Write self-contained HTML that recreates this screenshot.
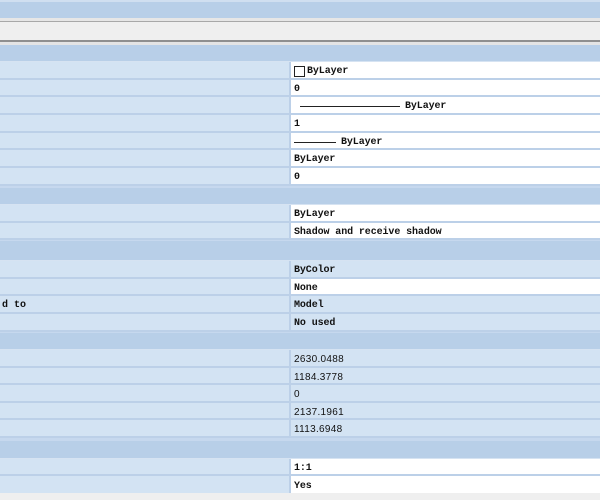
<!DOCTYPE html>
<html><head><style>
*{margin:0;padding:0;box-sizing:border-box}
body{width:600px;height:500px;overflow:hidden;background:#efefef;font-family:"Liberation Mono","Noto Serif CJK SC",monospace;font-size:10px;color:#111;position:relative}
.a{position:absolute;left:0;width:600px}
.hd{background:#b8cfe8;border-bottom:1px solid #d6e3f2}
.r{display:flex;border-bottom:2px solid #bcd0e8}
.r .k{width:291px;background:#d3e3f3;border-right:2px solid #bcd0e8}
.r .v{flex:1;background:#fff;padding-left:3px;padding-top:3px;display:flex;align-items:center;white-space:pre;font-weight:bold;letter-spacing:-0.1px}
.r .v.b{background:#d3e3f3}
.ln{display:inline-block;height:1px;background:#222;vertical-align:middle}
</style></head><body>
<div class="a" style="top:0;height:18px;background:#b8cfe8;border-top:2px solid #d0dff0"></div>
<div class="a" style="top:18px;height:4px;background:#e6e6e6;border-bottom:1px solid #a8a8a8"></div>
<div class="a" style="top:22px;height:18px;background:#efefef"></div>
<div class="a" style="top:40px;height:2px;background:#8f8f8f"></div>
<div class="a" style="top:42px;height:3px;background:#e4e4e4"></div>
<div class="a" style="top:45px;height:448px;background:#c6d8ee"></div>

<div class="a hd" style="top:45px;height:17px"></div>
<div class="a" style="top:62px">
<div class="r" style="height:18px"><div class="k"></div><div class="v"><span style="display:inline-block;width:11px;height:11px;border:1px solid #222;margin-right:2px"></span>ByLayer</div></div>
<div class="r" style="height:17px"><div class="k"></div><div class="v">0</div></div>
<div class="r" style="height:18px"><div class="k"></div><div class="v"><span class="ln" style="width:100px;margin:0 5px 0 6px"></span>ByLayer</div></div>
<div class="r" style="height:18px"><div class="k"></div><div class="v">1</div></div>
<div class="r" style="height:17px"><div class="k"></div><div class="v"><span class="ln" style="width:42px;margin-right:5px"></span>ByLayer</div></div>
<div class="r" style="height:18px"><div class="k"></div><div class="v">ByLayer</div></div>
<div class="r" style="height:18px"><div class="k"></div><div class="v">0</div></div>
</div>

<div class="a hd" style="top:188px;height:17px"></div>
<div class="a" style="top:205px">
<div class="r" style="height:18px"><div class="k"></div><div class="v">ByLayer</div></div>
<div class="r" style="height:17px"><div class="k"></div><div class="v">Shadow and receive shadow</div></div>
</div>

<div class="a hd" style="top:241px;height:20px"></div>
<div class="a" style="top:261px">
<div class="r" style="height:18px"><div class="k"></div><div class="v b">ByColor</div></div>
<div class="r" style="height:17px"><div class="k"></div><div class="v">None</div></div>
<div class="r" style="height:18px"><div class="k" style="padding-left:2px;padding-top:3px;display:flex;align-items:center;font-weight:bold">d to</div><div class="v b">Model</div></div>
<div class="r" style="height:18px"><div class="k"></div><div class="v b">No used</div></div>
</div>

<div class="a hd" style="top:333px;height:17px"></div>
<div class="a" style="top:350px;font-family:'Liberation Sans',sans-serif">
<div class="r" style="height:18px"><div class="k"></div><div class="v b" style="font-weight:normal;letter-spacing:0.3px">2630.0488</div></div>
<div class="r" style="height:17px"><div class="k"></div><div class="v b" style="font-weight:normal;letter-spacing:0.3px">1184.3778</div></div>
<div class="r" style="height:18px"><div class="k"></div><div class="v b" style="font-weight:normal">0</div></div>
<div class="r" style="height:17px"><div class="k"></div><div class="v b" style="font-weight:normal;letter-spacing:0.3px">2137.1961</div></div>
<div class="r" style="height:18px"><div class="k"></div><div class="v b" style="font-weight:normal;letter-spacing:0.3px">1113.6948</div></div>
</div>

<div class="a hd" style="top:441px;height:18px"></div>
<div class="a" style="top:459px">
<div class="r" style="height:17px"><div class="k"></div><div class="v">1:1</div></div>
<div class="r" style="height:17px;border-bottom:none"><div class="k"></div><div class="v">Yes</div></div>
</div>
</body></html>
